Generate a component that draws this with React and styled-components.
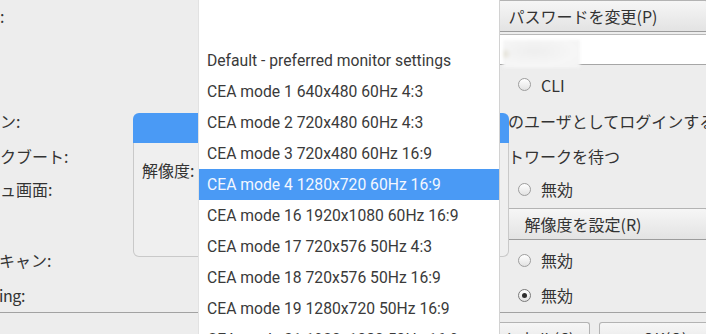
import styled, { createGlobalStyle } from "styled-components";

const GlobalStyle = createGlobalStyle`
  html, body {
    margin: 0;
    padding: 0;
  }
  body {
    width: 706px;
    height: 334px;
    overflow: hidden;
    background: #ededed;
    font-family: "Noto Sans CJK JP", sans-serif;
  }
`;

const Desktop = styled.div`
  position: relative;
  width: 706px;
  height: 334px;
  overflow: hidden;
  background: #ededed;
`;

// main configuration window, shifted partly off the left edge
const ConfigWindow = styled.div`
  position: absolute;
  z-index: 1;
  left: -92px;
  top: 0;
  padding-left: 12px;
  font-size: 16px;
  color: #333;
`;

const Form = styled.div`
  display: grid;
  grid-template-columns: 538px 250px;
  grid-template-rows: 32px 34px 37px 36px 33px 34px 36px 36px 34px;
`;

const Label = styled.div`
  align-self: center;
  white-space: nowrap;
  line-height: 20px;
  letter-spacing: ${(p) => (p.$tight ? "-0.45px" : "normal")};
`;

const Control = styled.div`
  display: flex;
  align-items: center;
  min-width: 0;
`;

const PushButton = styled.button`
  box-sizing: border-box;
  flex: ${(p) => (p.$w ? `0 0 ${p.$w}` : "1")};
  height: 32px;
  padding: 0 8px;
  font: inherit;
  color: #333;
  background: linear-gradient(#f6f6f6, #e3e3e3);
  border: 1px solid #b3b3b3;
  border-bottom-color: #9c9c9c;
  border-radius: 3px;
  white-space: nowrap;
`;

const HostField = styled.div`
  position: relative;
  box-sizing: border-box;
  flex: 1;
  height: 31px;
  background: #fff;
  border-top: 1px solid #b9b9b9;
  border-bottom: 1px solid #a6a6a6;
`;

// privacy blur laid over the host name
const Smudge = styled.div`
  position: absolute;
  left: 45px;
  top: 5px;
  width: 77px;
  height: 28px;
  background: radial-gradient(circle at 3% 50%, #e4e1d6 0, transparent 6px),
    radial-gradient(ellipse at 40% 40%, #eeeeee 0, #f6f6f6 60%, #f3f3f3 100%);
  filter: blur(1.5px);
`;

const RadioRow = styled.div`
  display: grid;
  grid-template-columns: 41px auto;
  column-gap: 19px;
  align-items: center;
  width: 100%;
`;

const RadioOption = styled.div`
  display: flex;
  align-items: center;
  gap: 10px;
  overflow: hidden;
  white-space: nowrap;
  line-height: 20px;
`;

const RadioDot = styled.span`
  flex: 0 0 13px;
  box-sizing: border-box;
  width: 13px;
  height: 13px;
  border-radius: 50%;
  border: 1px solid ${(p) => (p.$checked ? "#7a7a7a" : "#9d9d9d")};
  background: linear-gradient(#ffffff, #e2e2e2);
  display: flex;
  align-items: center;
  justify-content: center;

  &::after {
    content: "";
    width: 5px;
    height: 5px;
    border-radius: 50%;
    background: ${(p) => (p.$checked ? "#2e2e2e" : "transparent")};
  }
`;

const CheckOption = styled.div`
  display: flex;
  align-items: center;
  gap: 4px;
  white-space: nowrap;
  line-height: 20px;
`;

const CheckBox = styled.span`
  flex: 0 0 14px;
  box-sizing: border-box;
  width: 14px;
  height: 14px;
  border: 1px solid #8e8e8e;
  border-radius: 2px;
  background: linear-gradient(#ffffff, #e4e4e4);
`;

const Separator = styled.div`
  border-top: 1px solid #a2a2a2;
`;

const ActionBar = styled.div`
  display: flex;
  gap: 9px;
  padding: 9px 0 0 538px;
`;

// the small "resolution" dialog sitting over the main window
const SubDialog = styled.div`
  position: absolute;
  z-index: 2;
  left: 133px;
  top: 113px;
  width: 376px;
  display: flex;
  flex-direction: column;
  font-size: 16px;
  color: #333;
`;

const TitleBar = styled.div`
  height: 30px;
  background: #4a9af5;
  border-radius: 6px 6px 0 0;
`;

const SubBody = styled.div`
  height: 96px;
  padding: 17px 8px 0;
  background: #efefef;
  border: 1px solid #c9c9c9;
  border-top: none;
  border-radius: 0 0 6px 6px;
`;

// open combo box list
const Popup = styled.ul`
  position: absolute;
  z-index: 3;
  left: 198px;
  top: 0;
  width: 300px;
  height: 380px;
  margin: 0;
  padding: 45px 0 0;
  list-style: none;
  background: #fff;
  border-left: 1px solid #e2e2e2;
  border-right: 1px solid #d2d2d2;
  font-family: Roboto, sans-serif;
  font-size: 15.7px;
`;

const Item = styled.li`
  height: 31px;
  line-height: 31px;
  padding: 0 8px;
  white-space: nowrap;
  color: ${(p) => (p.$active ? "#f3f7ff" : "#3a3a3a")};
  background: ${(p) => (p.$active ? "#4a9af5" : "transparent")};
`;

const modes = [
  "Default - preferred monitor settings",
  "CEA mode 1 640x480 60Hz 4:3",
  "CEA mode 2 720x480 60Hz 4:3",
  "CEA mode 3 720x480 60Hz 16:9",
  "CEA mode 4 1280x720 60Hz 16:9",
  "CEA mode 16 1920x1080 60Hz 16:9",
  "CEA mode 17 720x576 50Hz 4:3",
  "CEA mode 18 720x576 50Hz 16:9",
  "CEA mode 19 1280x720 50Hz 16:9",
  "CEA mode 31 1920x1080 50Hz 16:9",
];

function Radios({ first, second, checked }) {
  return (
    <RadioRow>
      <RadioOption>
        <RadioDot $checked={checked === 0} />
        {first}
      </RadioOption>
      <RadioOption>
        <RadioDot $checked={checked === 1} />
        {second}
      </RadioOption>
    </RadioRow>
  );
}

export default function App() {
  return (
    <>
      <GlobalStyle />
      <Desktop>
        <ConfigWindow>
          <Form>
            <Label>パスワード:</Label>
            <Control>
              <PushButton>パスワードを変更(P)</PushButton>
            </Control>

            <Label>ホスト名:</Label>
            <Control>
              <HostField>
                <Smudge />
              </HostField>
            </Control>

            <Label>ブート:</Label>
            <Control>
              <Radios first="デスクトップ" second="CLI" checked={0} />
            </Control>

            <Label>自動ログイン:</Label>
            <Control>
              <CheckOption>
                <CheckBox />
                現在のユーザとしてログインする
              </CheckOption>
            </Control>

            <Label>ネットワークブート:</Label>
            <Control>
              <CheckOption>
                <CheckBox />
                ネットワークを待つ
              </CheckOption>
            </Control>

            <Label>スプラッシュ画面:</Label>
            <Control>
              <Radios first="有効" second="無効" checked={0} />
            </Control>

            <Label>解像度:</Label>
            <Control>
              <PushButton>解像度を設定(R)</PushButton>
            </Control>

            <Label>オーバースキャン:</Label>
            <Control>
              <Radios first="有効" second="無効" checked={0} />
            </Control>

            <Label $tight>Pixel Doubling:</Label>
            <Control>
              <Radios first="有効" second="無効" checked={1} />
            </Control>
          </Form>
          <Separator />
          <ActionBar>
            <PushButton $w="132px">キャンセル(C)</PushButton>
            <PushButton $w="132px">OK(O)</PushButton>
          </ActionBar>
        </ConfigWindow>

        <SubDialog>
          <TitleBar />
          <SubBody>
            <Label>解像度:</Label>
          </SubBody>
        </SubDialog>

        <Popup>
          {modes.map((m, i) => (
            <Item key={m} $active={i === 4}>
              {m}
            </Item>
          ))}
        </Popup>
      </Desktop>
    </>
  );
}
